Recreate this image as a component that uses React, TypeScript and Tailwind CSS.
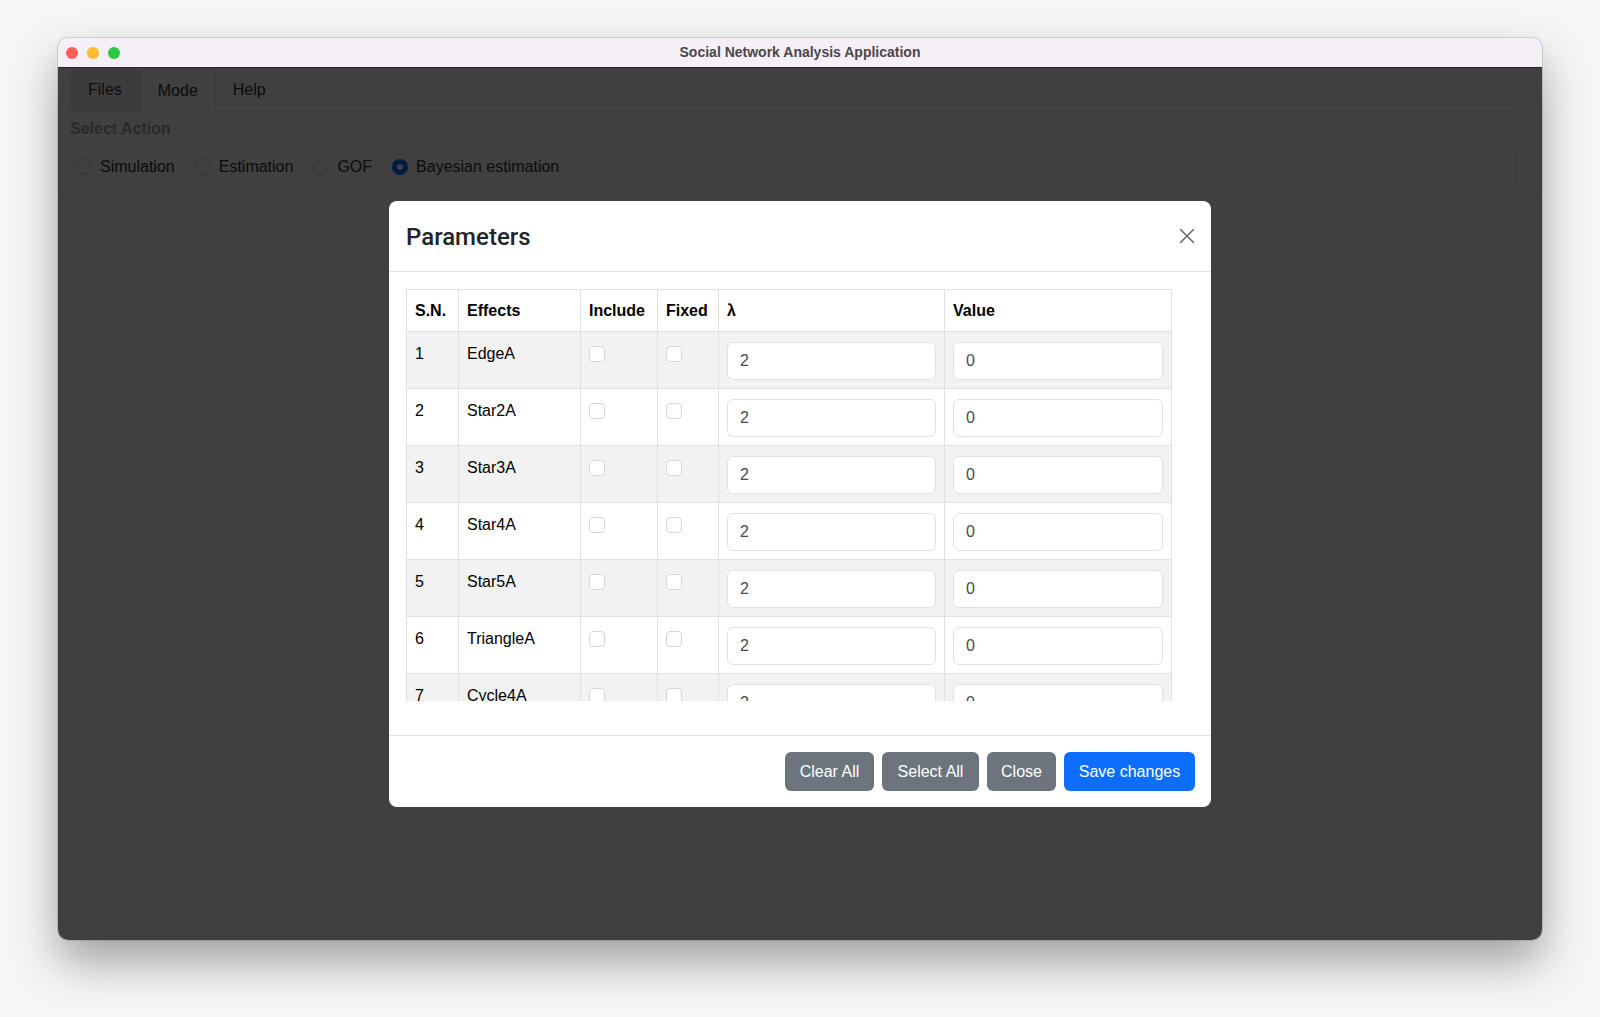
const rows = [
  { sn: 1, effect: "EdgeA" },
  { sn: 2, effect: "Star2A" },
  { sn: 3, effect: "Star3A" },
  { sn: 4, effect: "Star4A" },
  { sn: 5, effect: "Star5A" },
  { sn: 6, effect: "TriangleA" },
  { sn: 7, effect: "Cycle4A" },
  { sn: 8, effect: "Cycle5A" },
]

const actions = ["Simulation", "Estimation", "GOF", "Bayesian estimation"]

function Radio({ label, checked }: { label: string; checked?: boolean }) {
  return (
    <label className="flex items-center gap-2 mr-[20px]">
      {checked ? (
        <span className="w-4 h-4 rounded-full bg-[#0d6efd] flex items-center justify-center">
          <span className="w-[6px] h-[6px] rounded-full bg-white" />
        </span>
      ) : (
        <span className="w-4 h-4 rounded-full border border-[#c4c8cc] bg-white" />
      )}
      <span>{label}</span>
    </label>
  )
}

function Checkbox() {
  return <span className="block w-4 h-4 mt-1 border border-[#d3d7db] rounded-[4px] bg-white" />
}

export default function App() {
  return (
    <div className="min-h-screen w-full bg-[#f6f6f6] pt-[38px] flex justify-center font-['Liberation_Sans',Arial,sans-serif]">
      <div className="w-[1484px] h-[902px] rounded-[10px] overflow-hidden flex flex-col shadow-[0_22px_45px_rgba(0,0,0,0.35),0_0_0_1px_rgba(0,0,0,0.12)]">
        {/* Title bar */}
        <div className="h-[30px] shrink-0 bg-[#f5f0f8] border-b border-[#262626] grid grid-cols-[1fr_auto_1fr] items-center">
          <div className="flex items-center gap-[9px] pl-[8px]">
            <span className="w-3 h-3 rounded-full bg-[#ff5f57]" />
            <span className="w-3 h-3 rounded-full bg-[#febc2e]" />
            <span className="w-3 h-3 rounded-full bg-[#28c840]" />
          </div>
          <div className="text-[14px] font-bold text-[#4b464a]">Social Network Analysis Application</div>
          <div />
        </div>

        {/* Content */}
        <div className="flex-1 relative bg-white text-[#333] text-[16px]">
          <div className="border-b border-[#e4e4e4] pb-[10px]">
            <div className="ml-[12px] mr-[25px]">
              <div className="flex h-[43px] pt-px border-b border-[#dee2e6]">
                <div className="px-[18px] flex items-center bg-[#eef0f2] rounded-t-md">Files</div>
                <div className="px-[17px] flex items-center bg-white border border-b-0 border-[#dee2e6] rounded-t-md -mb-px">Mode</div>
                <div className="px-[17px] flex items-center">Help</div>
              </div>
              <div className="h-[36px] flex items-center font-bold text-[#a6a9ac]">Select Action</div>
              <div className="h-[36px] mt-[2px] border border-[#e6e6e6] flex items-center pl-[5px]">
                {actions.map((a, i) => (
                  <Radio key={a} label={a} checked={i === 3} />
                ))}
              </div>
            </div>
          </div>

          {/* Backdrop */}
          <div className="absolute inset-0 bg-black/75" />

          {/* Modal */}
          <div className="absolute inset-0 flex justify-center pt-[133px]">
            <div className="w-[822px] h-[606px] bg-white rounded-lg flex flex-col text-[#212529]">
              <div className="h-[71px] shrink-0 border-b border-[#dee2e6] flex items-center justify-between pl-[17px] pr-4">
                <h5 className="text-[24px] leading-9 font-medium font-['Roboto',Arial,sans-serif] pt-[2px]">Parameters</h5>
                <svg width="16" height="16" viewBox="0 0 16 16" className="text-[#6b6b6b]">
                  <path d="M1.5 1.5 14.5 14.5M14.5 1.5 1.5 14.5" stroke="currentColor" strokeWidth="1.6" strokeLinecap="round" />
                </svg>
              </div>

              <div className="pl-[17px] pr-4 pt-[17px] pb-[34px] border-b border-[#dee2e6]">
                <div className="h-[412px] overflow-hidden">
                  <table className="w-[765px] border-collapse table-fixed text-black">
                    <colgroup>
                      <col className="w-[52px]" />
                      <col className="w-[122px]" />
                      <col className="w-[77px]" />
                      <col className="w-[61px]" />
                      <col className="w-[226px]" />
                      <col className="w-[227px]" />
                    </colgroup>
                    <thead>
                      <tr className="h-[42px]">
                        {["S.N.", "Effects", "Include", "Fixed", "λ", "Value"].map((h) => (
                          <th key={h} className="border border-[#dee2e6] px-2 text-left font-bold align-middle">
                            {h}
                          </th>
                        ))}
                      </tr>
                    </thead>
                    <tbody>
                      {rows.map((r, i) => (
                        <tr key={r.sn} className={i % 2 === 0 ? "bg-[#f2f2f2]" : "bg-white"}>
                          <td className="border border-[#dee2e6] px-2 pt-[10px] pb-2 align-top leading-6">{r.sn}</td>
                          <td className="border border-[#dee2e6] px-2 pt-[10px] pb-2 align-top leading-6">{r.effect}</td>
                          <td className="border border-[#dee2e6] px-2 pt-[10px] pb-2 align-top">
                            <Checkbox />
                          </td>
                          <td className="border border-[#dee2e6] px-2 pt-[10px] pb-2 align-top">
                            <Checkbox />
                          </td>
                          <td className="border border-[#dee2e6] px-2 pt-[10px] pb-2 align-top">
                            <div className="h-[38px] w-full bg-white border border-[#dee2e6] rounded-md px-3 flex items-center text-[#4a4a4a]">2</div>
                          </td>
                          <td className="border border-[#dee2e6] px-2 pt-[10px] pb-2 align-top">
                            <div className="h-[38px] w-full bg-white border border-[#dee2e6] rounded-md px-3 flex items-center text-[#4a4a4a]">0</div>
                          </td>
                        </tr>
                      ))}
                    </tbody>
                  </table>
                </div>
              </div>

              <div className="flex-1 flex items-center justify-end gap-2 pr-4 text-white">
                <button className="w-[89px] h-[39px] rounded-md bg-[#6c757d]">Clear All</button>
                <button className="w-[97px] h-[39px] rounded-md bg-[#6c757d]">Select All</button>
                <button className="w-[69px] h-[39px] rounded-md bg-[#6c757d]">Close</button>
                <button className="w-[131px] h-[39px] rounded-md bg-[#0d6efd]">Save changes</button>
              </div>
            </div>
          </div>
        </div>
      </div>
    </div>
  )
}
